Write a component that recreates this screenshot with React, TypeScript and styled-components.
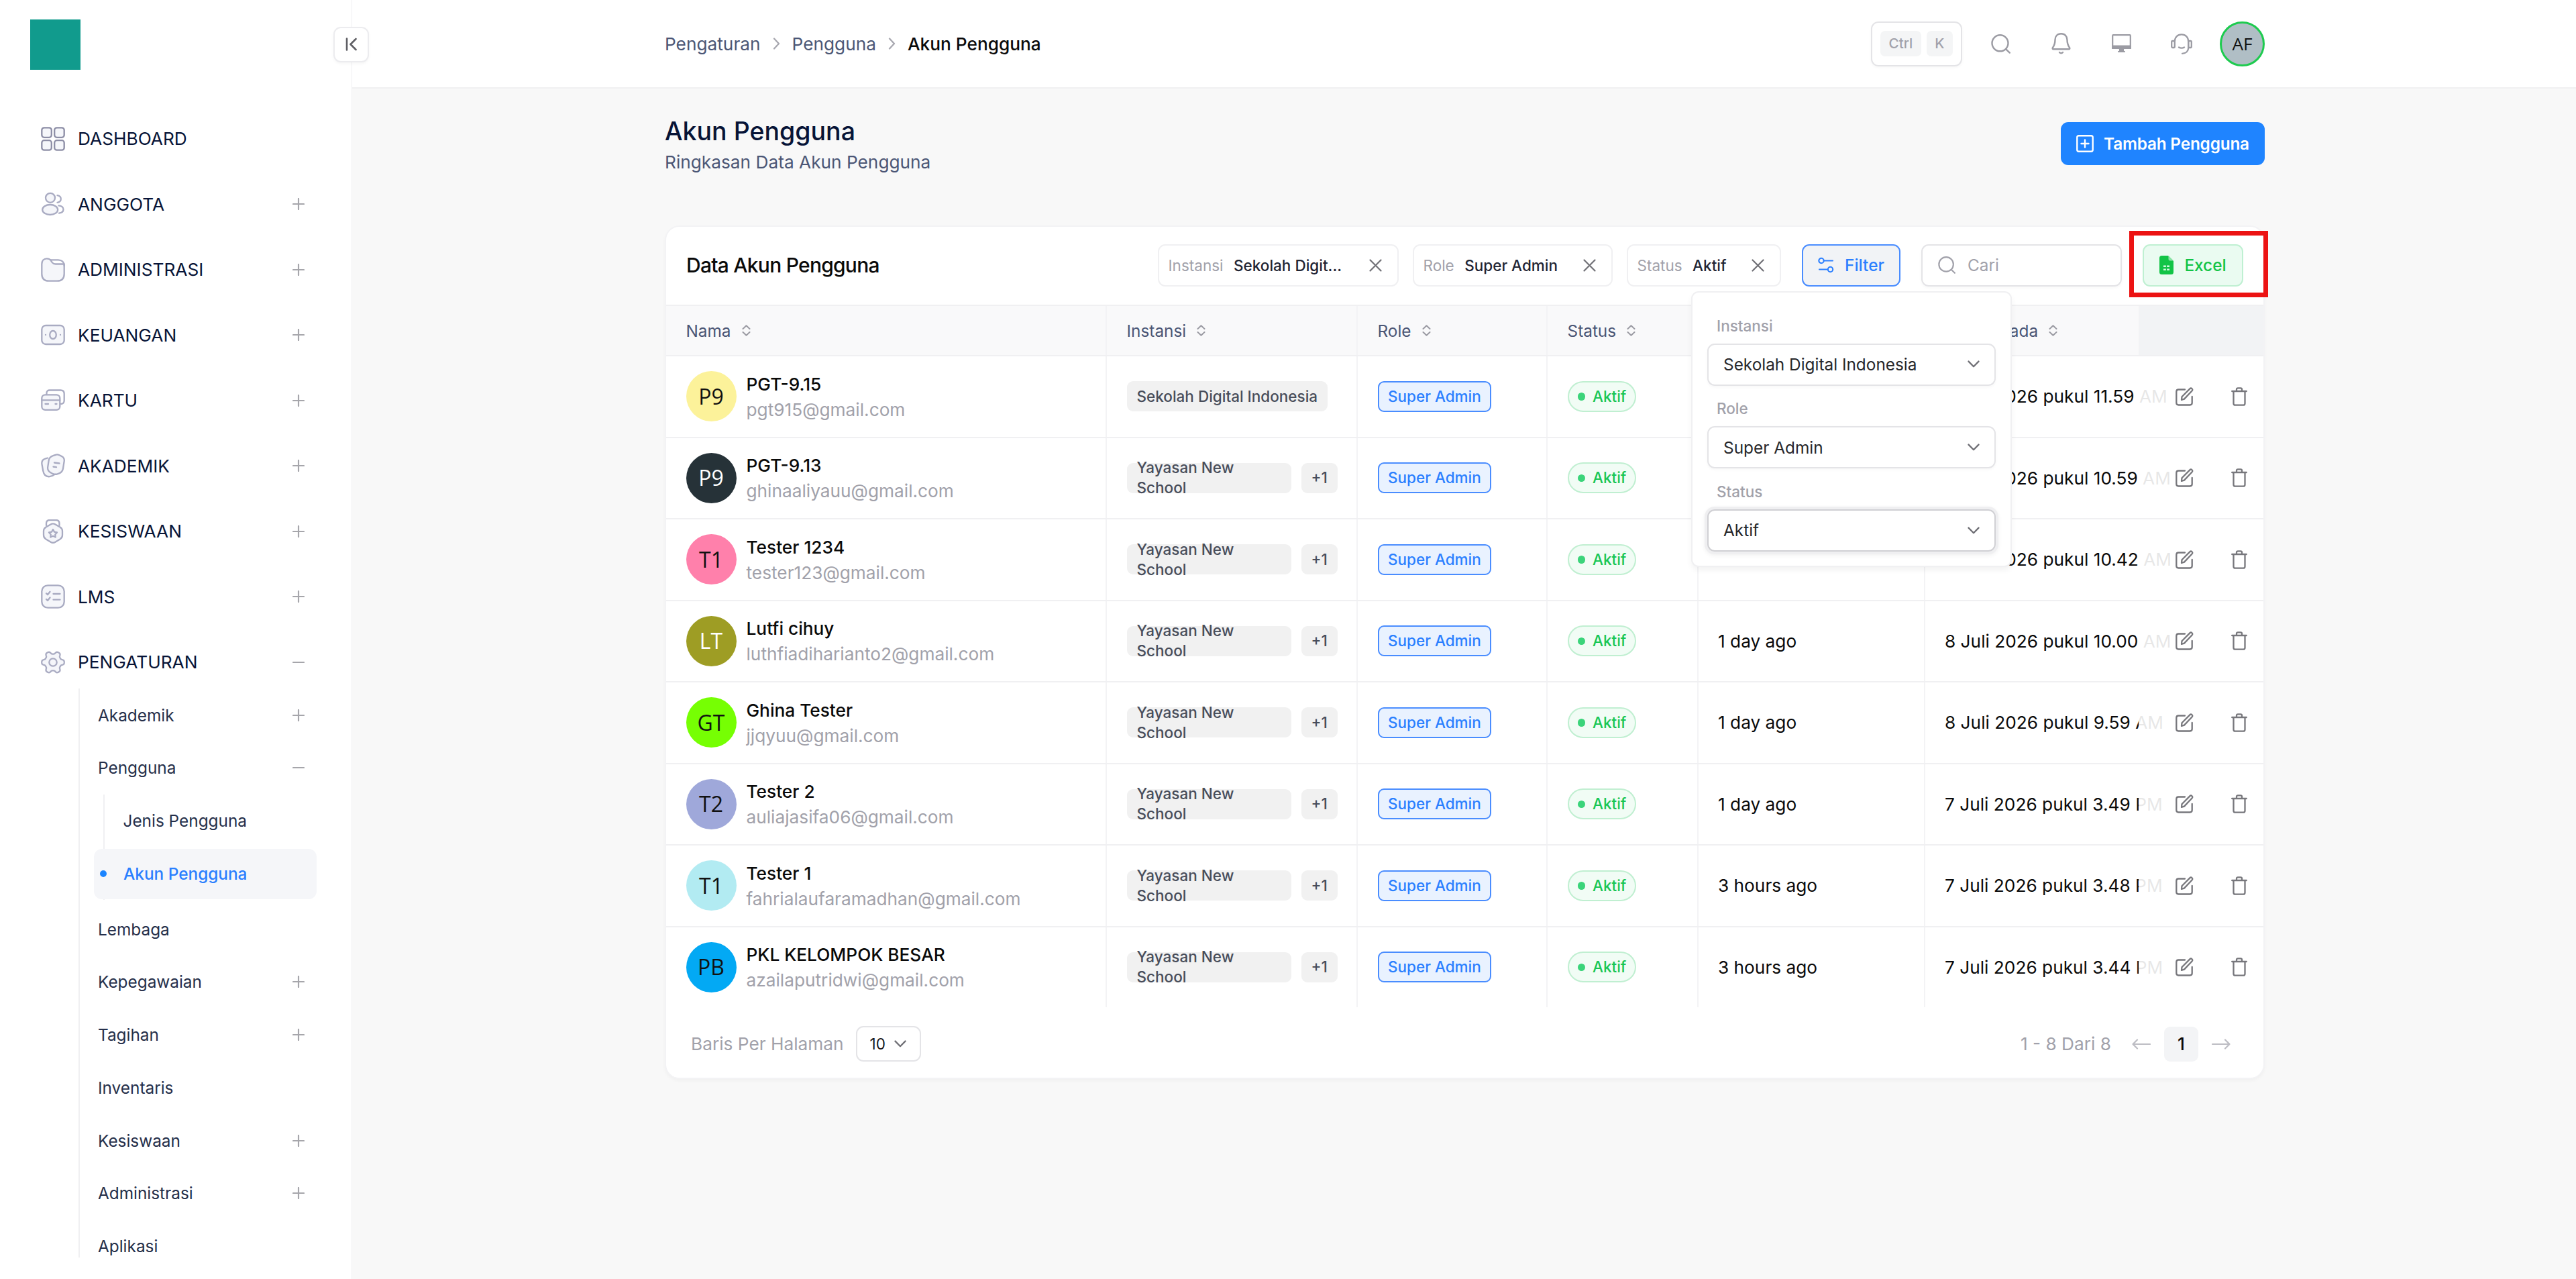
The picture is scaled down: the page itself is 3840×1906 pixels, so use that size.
import React from "react";
import styled, { createGlobalStyle, css } from "styled-components";

const color = {
  ink: "#0a0a0a",
  navy: "#071437",
  slate: "#252f4a",
  muted: "#4b5675",
  faint: "#a1a1aa",
  line: "#f0f0f2",
  control: "#e4e4e7",
  page: "#f8f8f8",
  blue: "#1b84ff",
  link: "#2a7fff",
};

const GlobalStyle = createGlobalStyle`
  *, *::before, *::after { box-sizing: border-box; }
  html, body { margin: 0; padding: 0; }
  body {
    font-family: Inter, "Liberation Sans", sans-serif;
    font-size: 26.25px;
    color: ${color.ink};
    background: ${color.page};
    overflow: hidden;
  }
  button { font: inherit; }
  svg { display: block; flex: none; }
`;

const Shell = styled.div`
  display: flex;
  width: 3840px;
  height: 1906px;
  overflow: hidden;
  background: ${color.page};
`;

/* ---------- sidebar ---------- */

const Sidebar = styled.aside`
  position: relative;
  flex: none;
  width: 525px;
  background: #fff;
  border-right: 1px solid ${color.line};
`;

const Brand = styled.div`
  height: 131px;
  padding: 29px 0 0 45px;
`;

const Logo = styled.div`
  width: 75px;
  height: 75px;
  background: #119b8d;
`;

const Collapse = styled.button`
  position: absolute;
  top: 40px;
  right: -26px;
  z-index: 2;
  display: grid;
  place-items: center;
  width: 53px;
  height: 53px;
  padding: 0 1px 2px 0;
  color: #5f5f64;
  background: #fff;
  border: 2px solid #ececef;
  border-radius: 11px;
  box-shadow: 0 2px 4px rgba(0, 0, 0, 0.04);
`;

const Nav = styled.nav`
  display: flex;
  flex-direction: column;
  gap: 18.75px;
  height: 1743px;
  padding: 36.5px 70px 0 61px;
  overflow: hidden;
  > * { flex: none; }
`;

const NavGroup = styled.div`
  display: flex;
  flex-direction: column;
`;

const NavRow = styled.div`
  display: flex;
  align-items: center;
  height: 78.75px;
  color: ${color.navy};
`;

const NavIcon = styled.span<{ $strong?: boolean }>`
  width: 36px;
  margin-right: 19px;
  color: ${(p) => (p.$strong ? "#8d8ea6" : "#a9abc2")};
`;

const Grow = styled.span`
  flex: 1;
`;

const Sub = styled.div`
  display: flex;
  flex-direction: column;
  margin-left: 56px;
  padding-left: 27px;
  border-left: 2px solid ${color.line};
`;

const SubRow = styled.div`
  display: flex;
  align-items: center;
  height: 78.75px;
  font-size: 24.375px;
  color: ${color.slate};
`;

const Nested = styled.div`
  display: flex;
  flex-direction: column;
  margin: 0 -18px 4px 7.5px;
  border-left: 2px solid ${color.line};
`;

const NestedRow = styled(SubRow)<{ $active?: boolean }>`
  padding-left: 28px;
  ${(p) =>
    p.$active &&
    css`
      gap: 25px;
      height: 75px;
      margin: 2px 0 1.75px -16px;
      padding-left: 9px;
      font-weight: 500;
      color: ${color.link};
      background: #f5f6f9;
      border-radius: 12px;
    `}
`;

const ActiveDot = styled.i`
  width: 10.5px;
  height: 10.5px;
  border-radius: 50%;
  background: ${color.blue};
`;

/* ---------- header ---------- */

const Main = styled.div`
  flex: 1;
  display: flex;
  flex-direction: column;
  min-width: 0;
`;

const Header = styled.header`
  display: flex;
  height: 132px;
  padding-left: 466px;
  background: #fff;
  border-bottom: 2px solid ${color.line};
`;

const HeaderInner = styled.div`
  display: flex;
  align-items: center;
  justify-content: space-between;
  width: 2385px;
`;

const Crumbs = styled.div`
  display: flex;
  align-items: center;
  color: ${color.muted};
  svg { margin: 0 18px; color: #a8a8b0; }
  strong { font-weight: 500; color: ${color.ink}; }
`;

const Tools = styled.div`
  display: flex;
  align-items: center;
  color: #9b9ba3;
`;

const Shortcut = styled.div`
  display: flex;
  gap: 8px;
  align-items: center;
  justify-content: center;
  width: 136px;
  height: 67px;
  margin-right: 31px;
  border: 2px solid ${color.control};
  border-radius: 11px;
  box-shadow: 0 2px 4px rgba(0, 0, 0, 0.03);
`;

const Key = styled.kbd`
  padding: 0 12.5px;
  font: 500 20.625px/37.5px Inter, "Liberation Sans", sans-serif;
  color: #a1a1aa;
  background: #f4f5f6;
  border-radius: 7px;
`;

const ToolIcon = styled.span`
  display: grid;
  place-items: center;
  width: 52px;
  margin-right: 38px;
  &:last-of-type { margin-right: 31px; }
`;

const UserBadge = styled.div`
  display: grid;
  place-items: center;
  width: 67px;
  height: 67px;
  font: 400 26.25px/1 "Open Sans", "Noto Sans", sans-serif;
  color: #111;
  background: #b0bec5;
  border: 3px solid #1ecb4f;
  border-radius: 50%;
`;

/* ---------- page ---------- */

const Page = styled.main`
  display: flex;
  flex-direction: column;
  width: 2385px;
  margin-left: 466px;
`;

const PageHead = styled.div`
  display: flex;
  justify-content: space-between;
  align-items: flex-start;
  height: 204px;
  padding-top: 41px;
`;

const Title = styled.h1`
  margin: 0;
  font-size: 37.5px;
  font-weight: 500;
  line-height: 45px;
  color: ${color.navy};
`;

const Subtitle = styled.p`
  margin: 5px 0 0;
  line-height: 38px;
  color: ${color.muted};
`;

const AddButton = styled.button`
  display: flex;
  align-items: center;
  justify-content: center;
  gap: 15px;
  width: 304px;
  height: 64px;
  margin-top: 9px;
  padding: 0;
  font-size: 24.375px;
  font-weight: 600;
  letter-spacing: -0.2px;
  color: #fff;
  background: #1f84ff;
  border: 0;
  border-radius: 11px;
`;

const Card = styled.section`
  height: 1272px;
  background: #fff;
  border: 2px solid #f3f3f5;
  border-radius: 22px;
  box-shadow: 0 3px 5px rgba(0, 0, 0, 0.03);
`;

const Toolbar = styled.div`
  display: flex;
  align-items: center;
  height: 116px;
  padding: 0 30px 2px;
`;

const CardTitle = styled.h2`
  flex: 1;
  margin: 0;
  font-size: 30px;
  font-weight: 500;
  letter-spacing: -0.025em;
`;

const box = css`
  display: flex;
  align-items: center;
  height: 63px;
  border: 2px solid ${color.control};
  border-radius: 11px;
`;

const Chip = styled.div<{ $gap?: number }>`
  ${box};
  gap: 15.5px;
  margin-right: ${(p) => p.$gap ?? 21}px;
  padding: 0 23px 0 14px;
  font-size: 22.5px;
  font-weight: 500;
  color: #1f2433;
  border-color: ${color.line};
  span { font-weight: 400; color: ${color.faint}; }
  svg { margin-left: 22px; color: #6f6f75; }
`;

const ChipValue = styled.b<{ $w?: number }>`
  width: ${(p) => (p.$w ? `${p.$w}px` : "auto")};
  font-weight: 500;
  white-space: nowrap;
`;

const FilterAnchor = styled.div`
  position: relative;
  margin-right: 31px;
`;

const FilterButton = styled.button`
  ${box};
  justify-content: center;
  gap: 16px;
  width: 147px;
  padding: 0;
  font-size: 24.375px;
  font-weight: 500;
  color: ${color.link};
  background: #f1f3f6;
  border-color: #4a8dff;
`;

const Search = styled.div`
  ${box};
  gap: 18px;
  width: 299px;
  margin-right: 31px;
  padding-left: 23px;
  font-size: 24.375px;
  color: ${color.faint};
  box-shadow: 0 2px 4px rgba(0, 0, 0, 0.03);
`;

const ExcelAnchor = styled.div`
  position: relative;
`;

const ExcelButton = styled.button`
  ${box};
  justify-content: center;
  gap: 16px;
  width: 150px;
  padding: 0;
  font-size: 24.375px;
  font-weight: 500;
  color: #12c446;
  background: #eafbf1;
  border-color: #bff0d2;
`;

const Highlight = styled.div`
  position: absolute;
  top: -20px;
  left: -20px;
  width: 207px;
  height: 99px;
  border: 7px solid #ec1313;
`;

/* ---------- filter panel ---------- */

const Panel = styled.div`
  position: absolute;
  z-index: 3;
  top: 70px;
  left: -165px;
  display: flex;
  flex-direction: column;
  width: 478px;
  height: 411px;
  padding: 27px 22px 0;
  background: #fff;
  border: 2px solid ${color.line};
  border-radius: 11px;
  box-shadow: 0 5px 9px rgba(0, 0, 0, 0.05);
`;

const FieldLabel = styled.div`
  height: 49px;
  padding-left: 14px;
  font-size: 22.5px;
  font-weight: 500;
  line-height: 45px;
  color: ${color.faint};
`;

const Select = styled.div<{ $focus?: boolean }>`
  ${box};
  justify-content: space-between;
  margin-bottom: 11.6px;
  padding: 0 22px;
  font-size: 24.375px;
  color: #27272a;
  box-shadow: 0 2px 4px rgba(0, 0, 0, 0.03);
  svg { color: #6f6f75; }
  ${(p) =>
    p.$focus &&
    css`
      border-color: #d0d0d4;
      box-shadow: 0 0 0 4px #efeff1, 0 2px 6px 4px rgba(0, 0, 0, 0.06);
    `}
`;

/* ---------- table ---------- */

const Table = styled.div`
  position: relative;
  overflow: hidden;
`;

const Row = styled.div<{ $head?: boolean; $last?: boolean }>`
  position: relative;
  display: grid;
  grid-template-columns: 657px 374px 283px 224.5px 338px 504.5px;
  height: ${(p) => (p.$head ? 77 : 121.5)}px;
  ${(p) =>
    p.$head &&
    css`
      font-size: 24.375px;
      color: ${color.muted};
      background: #f9f9fa;
      border-top: 2px solid ${color.line};
    `}
  border-bottom: 2px solid ${(p) => (p.$last ? "transparent" : color.line)};
`;

const Cell = styled.div<{ $head?: boolean; $last?: boolean }>`
  display: flex;
  align-items: center;
  gap: ${(p) => (p.$head ? 16 : 15)}px;
  min-width: 0;
  padding-left: 29.5px;
  white-space: nowrap;
  border-right: ${(p) => (p.$last ? 0 : 2)}px solid #f3f3f5;
  svg { color: #9b9ba3; }
`;

const Actions = styled.div<{ $head?: boolean }>`
  position: absolute;
  inset: 0 0 0 auto;
  display: flex;
  align-items: center;
  gap: 56px;
  width: 186px;
  padding-left: 55px;
  color: #77777c;
  background: ${(p) => (p.$head ? "#f2f3f5" : "rgba(255, 255, 255, 0.9)")};
`;

const Avatar = styled.div<{ $bg: string; $light?: boolean }>`
  display: grid;
  place-items: center;
  flex: none;
  width: 75px;
  height: 75px;
  font: 400 32px/1 "Open Sans", "Noto Sans", sans-serif;
  color: ${(p) => (p.$light ? "#fff" : "#111")};
  background: ${(p) => p.$bg};
  border-radius: 50%;
`;

const Person = styled.div`
  display: flex;
  flex-direction: column;
  padding-top: 2px;
  line-height: 38px;
  strong { font-weight: 500; font-size: 26.25px; }
  span { color: ${color.faint}; }
`;

const Tag = styled.span<{ $w?: number }>`
  display: flex;
  align-items: center;
  width: ${(p) => (p.$w ? `${p.$w}px` : "auto")};
  height: 45px;
  padding: 0 15px;
  font-size: 22.5px;
  font-weight: 500;
  line-height: 30px;
  white-space: ${(p) => (p.$w ? "normal" : "nowrap")};
  color: #484d5a;
  background: #f1f1f1;
  border-radius: 9px;
`;

const RoleTag = styled(Tag)`
  height: 46px;
  color: ${color.link};
  background: #e9f2ff;
  border: 2px solid #4a8dff;
  padding: 0 13.5px;
`;

const StatusTag = styled(Tag)`
  gap: 11px;
  height: 46px;
  padding: 0 13px 0 13px;
  color: #17c653;
  background: #f1fcf5;
  border: 2px solid #c0efd1;
  border-radius: 23px;
  i { width: 11.5px; height: 11.5px; border-radius: 50%; background: #3bd47a; }
`;

/* ---------- footer ---------- */

const Footer = styled.div`
  display: flex;
  align-items: center;
  height: 105px;
  padding: 0 49px 0 37px;
  color: ${color.faint};
`;

const PageSize = styled.div`
  display: flex;
  align-items: center;
  gap: 13px;
  height: 53px;
  margin-left: 18px;
  padding: 0 20px 0 19px;
  font-size: 22.5px;
  color: #18181b;
  border: 2px solid ${color.control};
  border-radius: 11px;
  svg { color: #6f6f75; }
`;

const Pager = styled.div`
  display: flex;
  align-items: center;
  gap: 20px;
  svg { color: #bdbdc4; }
`;

const Range = styled.span`
  margin-right: 11px;
`;

const CurrentPage = styled.b`
  display: grid;
  place-items: center;
  width: 51px;
  height: 52px;
  font-weight: 500;
  color: ${color.ink};
  background: #f3f4f6;
  border-radius: 9px;
`;

/* ---------- icons ---------- */

type IconProps = { w: number; h?: number; box: string; sw?: number; fill?: string; children: React.ReactNode };

const Icon = ({ w, h, box: viewBox, sw = 2, fill = "none", children }: IconProps) => (
  <svg
    width={w}
    height={h ?? w}
    viewBox={viewBox}
    fill={fill}
    stroke="currentColor"
    strokeWidth={sw}
    strokeLinecap="round"
    strokeLinejoin="round"
  >
    {children}
  </svg>
);

const tint = "#f5f6fa";

/* Outline of a six-toothed gear centred on (18, 18). */
const gearPath =
  Array.from({ length: 120 }, (_, i) => {
    const a = (i / 120) * Math.PI * 2;
    const r = 14.6 + 2.3 * Math.tanh(1.8 * Math.cos(6 * a));
    return `${i ? "L" : "M"}${(18 + r * Math.cos(a)).toFixed(2)} ${(18 + r * Math.sin(a)).toFixed(2)}`;
  }).join("") + "Z";

const Plus = () => (
  <Icon w={18} box="0 0 18 18" sw={2.2}><path d="M9 1v16M1 9h16" stroke="#a6a6ab" /></Icon>
);
const Minus = () => (
  <Icon w={18} box="0 0 18 18" sw={2.2}><path d="M1 9h16" stroke="#a6a6ab" /></Icon>
);
const Chevron = ({ w = 18 }: { w?: number }) => (
  <Icon w={w} h={w * 0.62} box="0 0 18 11" sw={2.3}><path d="M1.500 1.500 9 9.200l7.500-7.700" /></Icon>
);
const ChevronRight = () => (
  <Icon w={11} h={18} box="0 0 11 18" sw={2.3}><path d="m2 1.500 7 7.500-7 7.500" /></Icon>
);
const Sort = () => (
  <Icon w={13} h={17} box="0 0 13 17" sw={2}><path d="M1.500 6 6.500 1.300 11.500 6M1.500 11l5 4.700 5-4.700" /></Icon>
);
const Close = () => (
  <Icon w={19} box="0 0 19 19" sw={2.2}><path d="m1.500 1.500 16 16M17.500 1.500l-16 16" /></Icon>
);
const SearchIcon = ({ w = 29 }: { w?: number }) => (
  <Icon w={w} box="0 0 29 29" sw={2.4}><circle cx="13.500" cy="13.300" r="12" /><path d="m22.300 22.300 5.500 5.300" /></Icon>
);

const navIcons: Record<string, React.ReactNode> = {
  DASHBOARD: (
    <g fill={tint}>
      <rect x="1.300" y="1.300" width="14.500" height="14.500" rx="3.500" />
      <rect x="20.200" y="1.300" width="14.500" height="14.500" rx="3.500" />
      <rect x="1.300" y="20.200" width="14.500" height="14.500" rx="3.500" />
      <rect x="20.200" y="20.200" width="14.500" height="14.500" rx="3.500" />
    </g>
  ),
  ANGGOTA: (
    <>
      <circle cx="14" cy="8.800" r="7" fill={tint} />
      <ellipse cx="13.700" cy="26.500" rx="11.500" ry="7.500" fill={tint} />
      <path d="M24.500 5.200c3.500.6 5.300 2.600 5.300 5.300s-1.800 4.700-5.300 5.300M26.500 20.300c4.500.5 7 2.700 7 5.700s-2.500 5.200-6.500 5.700" />
    </>
  ),
  ADMINISTRASI: (
    <>
      <path fill={tint} d="M1.300 9.500c0-5 3-8.200 7.500-8.200 3.200 0 4.400.6 5.800 2.500l2.200 3.300c1.400 1.900 2.300 2.400 5 2.400h12.900v14.700c0 6.800-3.700 10.500-10.500 10.500H11.800c-6.800 0-10.500-3.700-10.500-10.500Z" />
      <path d="M14.500 3.300h11.200c5.500 0 9 3.300 9 8.700" />
    </>
  ),
  KEUANGAN: (
    <>
      <rect x="1.300" y="4" width="33.400" height="28" rx="6" fill={tint} />
      <ellipse cx="18" cy="18" rx="4.800" ry="6" />
      <path d="M7 18v.1M29 18v.1" />
    </>
  ),
  KARTU: (
    <>
      <path d="M8.500 8V6.500c0-2.500 1.700-4 4.300-4h16.500c3.500 0 5.400 1.900 5.400 5.300v10c0 3.300-1.700 5-4.700 5.200" />
      <rect x="1.300" y="9.300" width="27" height="22.500" rx="5" fill={tint} />
      <path d="M1.300 17.300h27M6.500 23h4.500M21.500 23h2" />
    </>
  ),
  AKADEMIK: (
    <>
      <path fill={tint} d="M10 6.500 7 7.300C2.500 8.500.7 11.600 1.500 16l1.700 9.500c1.200 6.500 4.500 9.300 9.800 8.700 3-.3 5.600-1.500 8-3.500" />
      <path fill={tint} d="m18 3.200 3.800-1.400c2-.6 3.800-.4 5.700.5l3.500 1.800c3 1.600 4.200 4 3.700 7.200l-1.700 11c-.6 3.600-2.400 5.800-5.700 7l-2.800 1c-2.500.8-5 .5-7.300-.6l-2.800-1.500c-3.600-2-4.700-4.500-4.200-8l1.600-10.500c.5-3.300 2.700-5.300 6.200-6.500Z" />
      <path d="M20 13.500l7.500 1M18.500 19.500l4.500.7" />
    </>
  ),
  KESISWAAN: (
    <>
      <path d="M8 9V6c0-3.400 1.600-5 5-5h9.500c3.400 0 5 1.600 5 5v3" />
      <path fill={tint} d="M14.500 7.500c2.500-1.500 4.500-1.500 7 0l7 4c2.300 1.400 3.500 3.300 3.500 6v6c0 2.700-1.200 4.500-3.500 6l-7 4.200c-2.500 1.500-4.500 1.500-7 0l-7-4.200c-2.300-1.500-3.500-3.300-3.500-6v-6c0-2.700 1.200-4.600 3.500-6Z" />
      <path d="m18 15 2 3.600 4 .8-2.700 3 .4 4.100-3.700-1.700-3.700 1.700.4-4.100-2.700-3 4-.8Z" />
    </>
  ),
  LMS: (
    <>
      <rect x="1.300" y="1.300" width="33.400" height="33.400" rx="9" fill={tint} />
      <path d="m8 13.300 2 2 3.500-4.500M8 22l2 2 3.500-4.500M18.500 14h10M18.500 22.700h10" />
    </>
  ),
  PENGATURAN: (
    <>
      <path fill={tint} d={gearPath} />
      <circle cx="18" cy="18" r="5.700" />
    </>
  ),
};

const topNav = ["DASHBOARD", "ANGGOTA", "ADMINISTRASI", "KEUANGAN", "KARTU", "AKADEMIK", "KESISWAAN", "LMS"];

const NavItem = ({ name, open }: { name: string; open?: boolean }) => (
  <NavRow>
    <NavIcon $strong={name === "DASHBOARD"}>
      <Icon w={36} box="0 0 36 36" sw={2.3}>{navIcons[name]}</Icon>
    </NavIcon>
    <Grow>{name}</Grow>
    {name !== "DASHBOARD" && (open ? <Minus /> : <Plus />)}
  </NavRow>
);

const subTail: [string, boolean][] = [
  ["Lembaga", false],
  ["Kepegawaian", true],
  ["Tagihan", true],
  ["Inventaris", false],
  ["Kesiswaan", true],
  ["Administrasi", true],
  ["Aplikasi", false],
];

type User = { initials: string; bg: string; light?: boolean; name: string; email: string; login?: string; created: string };

const users: User[] = [
  { initials: "P9", bg: "#fcf29a", name: "PGT-9.15", email: "pgt915@gmail.com", created: "8 Juli 2026 pukul 11.59 AM" },
  { initials: "P9", bg: "#263238", light: true, name: "PGT-9.13", email: "ghinaaliyauu@gmail.com", created: "8 Juli 2026 pukul 10.59 AM" },
  { initials: "T1", bg: "#ff80ab", name: "Tester 1234", email: "tester123@gmail.com", created: "8 Juli 2026 pukul 10.42 AM" },
  { initials: "LT", bg: "#9e9d24", light: true, name: "Lutfi cihuy", email: "luthfiadiharianto2@gmail.com", login: "1 day ago", created: "8 Juli 2026 pukul 10.00 AM" },
  { initials: "GT", bg: "#76ff03", name: "Ghina Tester", email: "jjqyuu@gmail.com", login: "1 day ago", created: "8 Juli 2026 pukul 9.59 AM" },
  { initials: "T2", bg: "#9fa8da", name: "Tester 2", email: "auliajasifa06@gmail.com", login: "1 day ago", created: "7 Juli 2026 pukul 3.49 PM" },
  { initials: "T1", bg: "#b2ebf2", name: "Tester 1", email: "fahrialaufaramadhan@gmail.com", login: "3 hours ago", created: "7 Juli 2026 pukul 3.48 PM" },
  { initials: "PB", bg: "#03a9f4", name: "PKL KELOMPOK BESAR", email: "azailaputridwi@gmail.com", login: "3 hours ago", created: "7 Juli 2026 pukul 3.44 PM" },
];

const columns = ["Nama", "Instansi", "Role", "Status", "", "Dibuat Pada"];

const EditIcon = () => (
  <Icon w={27} h={28} box="0 0 27 28" sw={2.3}>
    <path d="M14 3.500H4.500c-2 0-3.200 1.200-3.200 3.200v16.600c0 2 1.200 3.200 3.200 3.200h17c2 0 3.200-1.200 3.200-3.200V14" />
    <path d="M9 18.800l.5-4.600L21.300 2.400c1-1 2.300-1 3.200-.1s.9 2.200 0 3.200L13 17.600Z" />
  </Icon>
);
const TrashIcon = () => (
  <Icon w={24} h={28} box="0 0 24 28" sw={2.3}>
    <path d="M1.200 6h21.600M8 5.500V3.300c0-1.300.7-2 2-2h4c1.300 0 2 .7 2 2v2.200M3.500 6.500v17.700c0 1.600.9 2.500 2.500 2.500h12c1.600 0 2.500-.9 2.500-2.500V6.500" />
  </Icon>
);

const SidebarView = () => (
  <Sidebar>
    <Brand><Logo /></Brand>
    <Collapse aria-label="Collapse sidebar">
      <Icon w={17} h={20} box="0 0 17 20" sw={2.6}><path d="M2 1.500v17M15.500 2 7.500 10l8 8" /></Icon>
    </Collapse>
    <Nav>
      {topNav.map((n) => <NavItem key={n} name={n} />)}
      <NavGroup>
        <NavItem name="PENGATURAN" open />
        <Sub>
          <SubRow><Grow>Akademik</Grow><Plus /></SubRow>
          <SubRow><Grow>Pengguna</Grow><Minus /></SubRow>
          <Nested>
            <NestedRow>Jenis Pengguna</NestedRow>
            <NestedRow $active><ActiveDot />Akun Pengguna</NestedRow>
          </Nested>
          {subTail.map(([label, plus]) => (
            <SubRow key={label}><Grow>{label}</Grow>{plus && <Plus />}</SubRow>
          ))}
        </Sub>
      </NavGroup>
    </Nav>
  </Sidebar>
);

const HeaderView = () => (
  <Header>
    <HeaderInner>
      <Crumbs>
        Pengaturan<ChevronRight />Pengguna<ChevronRight /><strong>Akun Pengguna</strong>
      </Crumbs>
      <Tools>
        <Shortcut><Key>Ctrl</Key><Key>K</Key></Shortcut>
        <ToolIcon><SearchIcon /></ToolIcon>
        <ToolIcon>
          <Icon w={29} h={32} box="0 0 29 32" sw={2.4}>
            <path d="M14.500 1.300c-5.500 0-9 3.700-9 9 0 6-1.300 8.700-3.500 11.700-.8 1.300-.3 2.300 1.200 2.300h22.600c1.500 0 2-1 1.200-2.300-2.200-3-3.500-5.700-3.500-11.700 0-5.300-3.500-9-9-9Z" />
            <path d="M12 29c1.500 1.700 3.500 1.700 5 0" />
          </Icon>
        </ToolIcon>
        <ToolIcon>
          <Icon w={29} h={28} box="0 0 29 28" sw={2.2}>
            <rect x="1.200" y="1.200" width="26.600" height="19.500" rx="1" />
            <path d="M1 17.500h27v3.500H1ZM12 21h5v4h-5ZM10 26h9" fill="currentColor" />
          </Icon>
        </ToolIcon>
        <ToolIcon>
          <Icon w={32} h={31} box="0 0 32 31" sw={2.3}>
            <rect x="1.200" y="11" width="4.600" height="10" rx="1.500" />
            <rect x="26.200" y="11" width="4.600" height="10" rx="1.500" />
            <path d="M5.800 12C5.800 5.500 10 1.300 16 1.300S26.200 5.500 26.200 12v9c0 5-3.500 8.500-9.200 8.800M12 20.500c2.500 1.500 5.500 1.500 8 0" />
          </Icon>
        </ToolIcon>
        <UserBadge>AF</UserBadge>
      </Tools>
    </HeaderInner>
  </Header>
);

const FilterPanel = () => (
  <Panel>
    <FieldLabel>Instansi</FieldLabel>
    <Select>Sekolah Digital Indonesia<Chevron /></Select>
    <FieldLabel>Role</FieldLabel>
    <Select>Super Admin<Chevron /></Select>
    <FieldLabel>Status</FieldLabel>
    <Select $focus>Aktif<Chevron /></Select>
  </Panel>
);

const ToolbarView = () => (
  <Toolbar>
    <CardTitle>Data Akun Pengguna</CardTitle>
    <Chip><span>Instansi</span><ChipValue $w={164}>Sekolah Digit...</ChipValue><Close /></Chip>
    <Chip><span>Role</span><ChipValue>Super Admin</ChipValue><Close /></Chip>
    <Chip $gap={31}><span>Status</span><ChipValue>Aktif</ChipValue><Close /></Chip>
    <FilterAnchor>
      <FilterButton>
        <Icon w={24} h={24} box="0 0 24 24" sw={2.1}>
          <circle cx="5" cy="5.500" r="3.700" /><path d="M8.700 5.500H22" />
          <circle cx="18.500" cy="18.500" r="3.700" /><path d="M2 18.500h12.800" />
        </Icon>
        Filter
      </FilterButton>
      <FilterPanel />
    </FilterAnchor>
    <Search><SearchIcon w={26} />Cari</Search>
    <ExcelAnchor>
      <ExcelButton>
        <svg width="21" height="28" viewBox="0 0 21 28">
          <path d="M3.500 0H13l8 8v16.500a3.500 3.500 0 0 1-3.500 3.500h-14A3.500 3.500 0 0 1 0 24.500v-21A3.500 3.500 0 0 1 3.500 0Z" fill="#12c446" />
          <path d="M13.500 0 21 7.500h-5a2.500 2.500 0 0 1-2.500-2.500Z" fill="#8be3a6" />
          <path d="M6 14.500h3.800v2.600H6Zm5.200 0H15v2.600h-3.800ZM6 19.500h3.800v2.600H6Zm5.200 0H15v2.600h-3.800Z" fill="#d5f7e0" />
        </svg>
        Excel
      </ExcelButton>
      <Highlight />
    </ExcelAnchor>
  </Toolbar>
);

const TableView = () => (
  <Table>
    <Row $head>
      {columns.map((c, i) => (
        <Cell key={i} $head $last={i === 5}>{c && <>{c}<Sort /></>}</Cell>
      ))}
      <Actions $head />
    </Row>
    {users.map((u, i) => (
      <Row key={u.email} $last={i === users.length - 1}>
        <Cell>
          <Avatar $bg={u.bg} $light={u.light}>{u.initials}</Avatar>
          <Person><strong>{u.name}</strong><span>{u.email}</span></Person>
        </Cell>
        <Cell>
          {i === 0 ? <Tag>Sekolah Digital Indonesia</Tag> : <><Tag $w={245}>Yayasan New School</Tag><Tag>+1</Tag></>}
        </Cell>
        <Cell><RoleTag>Super Admin</RoleTag></Cell>
        <Cell><StatusTag><i />Aktif</StatusTag></Cell>
        <Cell>{u.login}</Cell>
        <Cell $last>{u.created}</Cell>
        <Actions><EditIcon /><TrashIcon /></Actions>
      </Row>
    ))}
  </Table>
);

const FooterView = () => (
  <Footer>
    Baris Per Halaman
    <PageSize>10<Chevron w={18} /></PageSize>
    <Grow />
    <Pager>
      <Range>1 - 8 Dari 8</Range>
      <Icon w={28} h={16} box="0 0 28 16" sw={2.2}><path d="M27 8H1.500M8 1.500 1.500 8 8 14.500" /></Icon>
      <CurrentPage>1</CurrentPage>
      <Icon w={28} h={16} box="0 0 28 16" sw={2.2}><path d="M1 8h25.500M20 1.500 26.500 8 20 14.500" /></Icon>
    </Pager>
  </Footer>
);

export default function App() {
  return (
    <>
      <GlobalStyle />
      <Shell>
        <SidebarView />
        <Main>
          <HeaderView />
          <Page>
            <PageHead>
              <div>
                <Title>Akun Pengguna</Title>
                <Subtitle>Ringkasan Data Akun Pengguna</Subtitle>
              </div>
              <AddButton>
                <Icon w={26} box="0 0 26 26" sw={2.4}>
                  <rect x="1.300" y="1.300" width="23.400" height="23.400" rx="2.500" />
                  <path d="M13 7.500v11M7.500 13h11" />
                </Icon>
                Tambah Pengguna
              </AddButton>
            </PageHead>
            <Card>
              <ToolbarView />
              <TableView />
              <FooterView />
            </Card>
          </Page>
        </Main>
      </Shell>
    </>
  );
}
